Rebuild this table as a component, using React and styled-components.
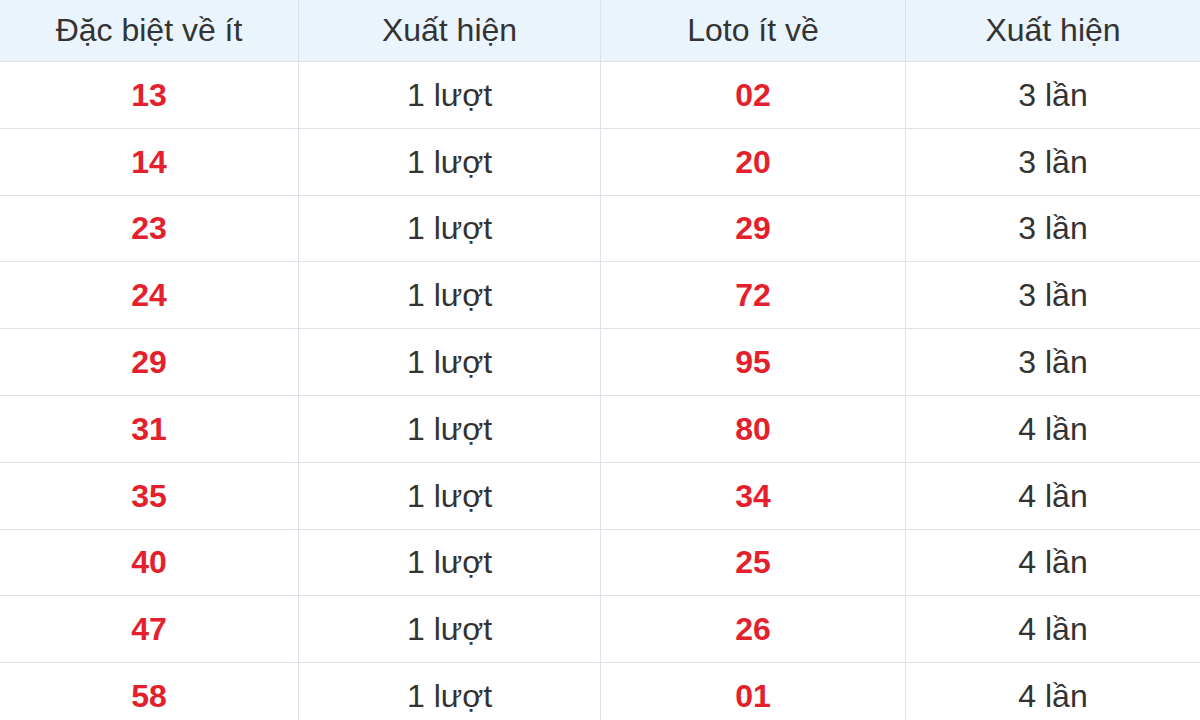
import styled, { createGlobalStyle } from 'styled-components';

const GlobalStyle = createGlobalStyle`
  html, body {
    margin: 0;
    padding: 0;
    background: #ffffff;
  }
  body {
    font-family: 'Liberation Sans', Arial, sans-serif;
    overflow: hidden;
  }
`;

const Table = styled.div`
  width: 1200px;
  height: 720px;
  overflow: hidden;
  background: #fff;
`;

const Row = styled.div`
  display: grid;
  grid-template-columns: 299px 302px 305px 1fr;
  height: ${p => (p.$head ? '62px' : '66.8px')};
  background: ${p => (p.$head ? '#eaf4fd' : '#fff')};
  border-bottom: 1px solid #dde2e8;
  box-sizing: border-box;
`;

const Cell = styled.div`
  display: flex;
  align-items: center;
  justify-content: center;
  border-right: 1px solid #dde2e8;
  font-size: 32px;
  color: ${p => (p.$accent ? '#e4202c' : '#333')};
  font-weight: ${p => (p.$accent ? 700 : 400)};
  padding-top: ${p => (p.$head ? '0' : '1px')};

  &:last-child {
    border-right: none;
  }
`;

const rows = [
  ['13', '1 lượt', '02', '3 lần'],
  ['14', '1 lượt', '20', '3 lần'],
  ['23', '1 lượt', '29', '3 lần'],
  ['24', '1 lượt', '72', '3 lần'],
  ['29', '1 lượt', '95', '3 lần'],
  ['31', '1 lượt', '80', '4 lần'],
  ['35', '1 lượt', '34', '4 lần'],
  ['40', '1 lượt', '25', '4 lần'],
  ['47', '1 lượt', '26', '4 lần'],
  ['58', '1 lượt', '01', '4 lần'],
];

export default function App() {
  return (
    <>
      <GlobalStyle />
      <Table>
        <Row $head>
          <Cell $head>Đặc biệt về ít</Cell>
          <Cell $head>Xuất hiện</Cell>
          <Cell $head>Loto ít về</Cell>
          <Cell $head>Xuất hiện</Cell>
        </Row>
        {rows.map((r, i) => (
          <Row key={i}>
            <Cell $accent>{r[0]}</Cell>
            <Cell>{r[1]}</Cell>
            <Cell $accent>{r[2]}</Cell>
            <Cell>{r[3]}</Cell>
          </Row>
        ))}
      </Table>
    </>
  );
}
